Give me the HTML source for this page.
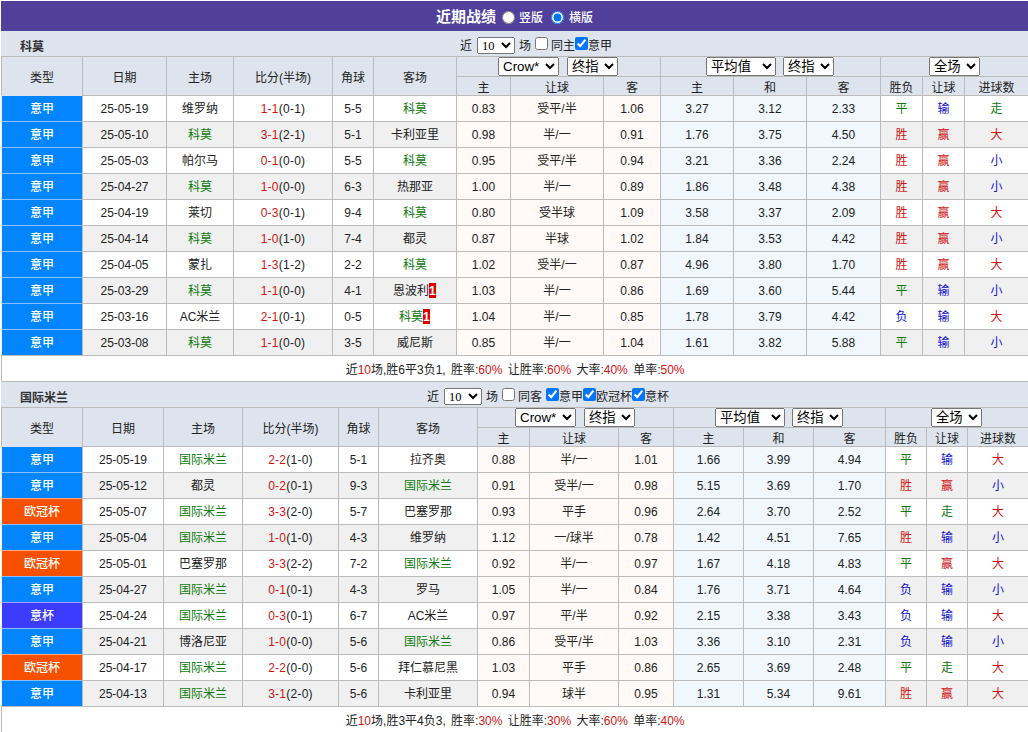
<!DOCTYPE html>
<html lang="zh-CN">
<head>
<meta charset="utf-8">
<title>近期战绩</title>
<style>
html,body{margin:0;padding:0;background:#fff;}
body{font-family:"Liberation Sans","Noto Sans CJK SC",sans-serif;font-size:12px;color:#222;overflow:hidden;}
#wrap{position:absolute;left:1px;top:1px;width:1027px;}
.top{height:30px;line-height:30px;background:#50409c;color:#fff;text-align:center;white-space:nowrap;font-size:12px;}
.top .tt{font-size:15px;font-weight:bold;vertical-align:middle;}
.top .rd{margin:0 4px 0 6px;width:13px;height:13px;vertical-align:middle;}
.top .rd2{margin-left:8px;margin-right:5px;}
.top .rl{vertical-align:middle;position:relative;top:1px;font-weight:500;}
.top .rd{position:relative;top:0.5px;}
table.t{border-collapse:separate;border-spacing:0;table-layout:fixed;width:1027px;}
table.t td,table.t th{box-sizing:border-box;border-left:1px solid #bbb;border-top:1px solid #bbb;padding:0;text-align:center;font-weight:normal;white-space:nowrap;overflow:hidden;}
tr.tb td{height:26px;background:#dde4ee;border-left-color:#dde4ee;}
tr.tb.first td{height:25px;border-top:0;}
tr.tb .nm{float:left;margin-left:18px;font-weight:bold;line-height:25px;color:#333;position:relative;top:4px;}
tr.tb td{position:relative;text-align:left;}
tr.tb .ct{line-height:25px;position:absolute;top:3px;white-space:nowrap;}
tr.tb .ct1{left:458px;}
tr.tb .ct2{left:425px;}
tr.h1 th{height:20px;background:#dde4ee;}
tr.h2 th{height:19px;background:#dde4ee;}
tr.d td{height:26px;background:#fff;}
tr.d.alt td{background:#f0f0f0;}
tr.d td.a{background:#fffaf7;}
tr.d td.e{background:#f0f8fd;}
tr.d td.lg{color:#fff;font-weight:500;border-top-color:rgba(255,255,255,.5);border-left-color:rgba(255,255,255,.94);}
tr.d.f td.lg{border-top-color:#dfe5ee;}
td.l-sa{background:#0385ff !important;}
td.l-cl{background:#f75000 !important;}
td.l-ci{background:#3c3cff !important;}
tr.sm td{height:26px;background:#fff;word-spacing:2px;}
tr.d td.c{padding-bottom:2px;}
.g{color:#0f7a0f;}
.r{color:#cf1414;}
.b{color:#1010d0;}
.rc{display:inline-block;background:#e30000;color:#fff;font-weight:bold;width:7px;height:15px;line-height:17px;font-size:12px;vertical-align:middle;text-align:center;margin:-3px 1px 0 0;text-indent:-0.5px;overflow:hidden;}
select{font-family:"Liberation Sans","Noto Sans CJK SC",sans-serif;font-size:13.33px;height:19px;padding:0;margin:0;vertical-align:top;box-sizing:border-box;color:#000;}
tr.h1 th.sl{line-height:0;font-size:0;}
.s59{width:61px}.s50{width:51px}.s70{width:70px}
tr.h1 th.sl{text-align:left;}
.s38{width:38px;height:17px;margin:0 4px 0 5px;font-family:"Liberation Serif","Noto Serif CJK SC",serif;font-size:12.5px;vertical-align:middle;position:relative;top:-1px;padding-bottom:3px;}
.ml9{margin-left:8px}.ml8{margin-left:7px}
.cb{width:13px;height:13px;margin:0;vertical-align:middle;position:relative;top:-3px;}
.m4{margin:0 3px 0 4px;}
.mr4{margin-right:4px;}

td.sc{letter-spacing:0.25px;}

</style>
</head>
<body>
<div id="wrap">
<div class="top"><span class="tt">近期战绩</span><input type="radio" name="v" class="rd"><span class="rl">竖版</span><input type="radio" name="v" class="rd rd2" checked><span class="rl">横版</span></div>
<table class="t" cellspacing="0" cellpadding="0">
<colgroup><col style="width:81px"><col style="width:84px"><col style="width:67px"><col style="width:99px"><col style="width:41px"><col style="width:83px"><col style="width:54px"><col style="width:93px"><col style="width:57px"><col style="width:73px"><col style="width:73px"><col style="width:74px"><col style="width:42px"><col style="width:42px"><col style="width:64px"></colgroup>
<tr class="tb first"><td colspan="15"><span class="nm">科莫</span><span class="ct ct1">近<select class="s38"><option>10</option></select>场<input type="checkbox" class="cb m4"><span class="lb4">同主</span><input type="checkbox" class="cb" checked>意甲</span></td></tr>
<tr class="h1"><th rowspan="2">类型</th><th rowspan="2">日期</th><th rowspan="2">主场</th><th rowspan="2">比分(半场)</th><th rowspan="2">角球</th><th rowspan="2">客场</th><th colspan="3" class="sl"><select class="s59" style="margin-left:41px"><option>Crow*</option></select><select class="s50 ml9"><option>终指</option></select></th><th colspan="3" class="sl"><select class="s70" style="margin-left:45px"><option>平均值</option></select><select class="s50 ml8"><option>终指</option></select></th><th colspan="3" class="sl"><select class="s50" style="margin-left:48px"><option>全场</option></select></th></tr>
<tr class="h2"><th>主</th><th>让球</th><th>客</th><th>主</th><th>和</th><th>客</th><th>胜负</th><th>让球</th><th>进球数</th></tr>
<tr class="d f"><td class="lg c l-sa">意甲</td><td>25-05-19</td><td class="c">维罗纳</td><td class="sc"><span class="r">1-1</span>(0-1)</td><td>5-5</td><td class="c"><span class="g">科莫</span></td><td class="a">0.83</td><td class="a c">受平/半</td><td class="a">1.06</td><td class="e">3.27</td><td class="e">3.12</td><td class="e">2.33</td><td class="c g">平</td><td class="c b">输</td><td class="c g">走</td></tr>
<tr class="d alt"><td class="lg c l-sa">意甲</td><td>25-05-10</td><td class="c"><span class="g">科莫</span></td><td class="sc"><span class="r">3-1</span>(2-1)</td><td>5-1</td><td class="c">卡利亚里</td><td class="a">0.98</td><td class="a c">半/一</td><td class="a">0.91</td><td class="e">1.76</td><td class="e">3.75</td><td class="e">4.50</td><td class="c r">胜</td><td class="c r">赢</td><td class="c r">大</td></tr>
<tr class="d"><td class="lg c l-sa">意甲</td><td>25-05-03</td><td class="c">帕尔马</td><td class="sc"><span class="r">0-1</span>(0-0)</td><td>5-5</td><td class="c"><span class="g">科莫</span></td><td class="a">0.95</td><td class="a c">受平/半</td><td class="a">0.94</td><td class="e">3.21</td><td class="e">3.36</td><td class="e">2.24</td><td class="c r">胜</td><td class="c r">赢</td><td class="c b">小</td></tr>
<tr class="d alt"><td class="lg c l-sa">意甲</td><td>25-04-27</td><td class="c"><span class="g">科莫</span></td><td class="sc"><span class="r">1-0</span>(0-0)</td><td>6-3</td><td class="c">热那亚</td><td class="a">1.00</td><td class="a c">半/一</td><td class="a">0.89</td><td class="e">1.86</td><td class="e">3.48</td><td class="e">4.38</td><td class="c r">胜</td><td class="c r">赢</td><td class="c b">小</td></tr>
<tr class="d"><td class="lg c l-sa">意甲</td><td>25-04-19</td><td class="c">莱切</td><td class="sc"><span class="r">0-3</span>(0-1)</td><td>9-4</td><td class="c"><span class="g">科莫</span></td><td class="a">0.80</td><td class="a c">受半球</td><td class="a">1.09</td><td class="e">3.58</td><td class="e">3.37</td><td class="e">2.09</td><td class="c r">胜</td><td class="c r">赢</td><td class="c r">大</td></tr>
<tr class="d alt"><td class="lg c l-sa">意甲</td><td>25-04-14</td><td class="c"><span class="g">科莫</span></td><td class="sc"><span class="r">1-0</span>(1-0)</td><td>7-4</td><td class="c">都灵</td><td class="a">0.87</td><td class="a c">半球</td><td class="a">1.02</td><td class="e">1.84</td><td class="e">3.53</td><td class="e">4.42</td><td class="c r">胜</td><td class="c r">赢</td><td class="c b">小</td></tr>
<tr class="d"><td class="lg c l-sa">意甲</td><td>25-04-05</td><td class="c">蒙扎</td><td class="sc"><span class="r">1-3</span>(1-2)</td><td>2-2</td><td class="c"><span class="g">科莫</span></td><td class="a">1.02</td><td class="a c">受半/一</td><td class="a">0.87</td><td class="e">4.96</td><td class="e">3.80</td><td class="e">1.70</td><td class="c r">胜</td><td class="c r">赢</td><td class="c r">大</td></tr>
<tr class="d alt"><td class="lg c l-sa">意甲</td><td>25-03-29</td><td class="c"><span class="g">科莫</span></td><td class="sc"><span class="r">1-1</span>(0-0)</td><td>4-1</td><td class="c">恩波利<span class="rc">1</span></td><td class="a">1.03</td><td class="a c">半/一</td><td class="a">0.86</td><td class="e">1.69</td><td class="e">3.60</td><td class="e">5.44</td><td class="c g">平</td><td class="c b">输</td><td class="c b">小</td></tr>
<tr class="d"><td class="lg c l-sa">意甲</td><td>25-03-16</td><td class="c">AC米兰</td><td class="sc"><span class="r">2-1</span>(0-1)</td><td>0-5</td><td class="c"><span class="g">科莫</span><span class="rc">1</span></td><td class="a">1.04</td><td class="a c">半/一</td><td class="a">0.85</td><td class="e">1.78</td><td class="e">3.79</td><td class="e">4.42</td><td class="c b">负</td><td class="c b">输</td><td class="c r">大</td></tr>
<tr class="d alt"><td class="lg c l-sa">意甲</td><td>25-03-08</td><td class="c"><span class="g">科莫</span></td><td class="sc"><span class="r">1-1</span>(0-0)</td><td>3-5</td><td class="c">威尼斯</td><td class="a">0.85</td><td class="a c">半/一</td><td class="a">1.04</td><td class="e">1.61</td><td class="e">3.82</td><td class="e">5.88</td><td class="c g">平</td><td class="c b">输</td><td class="c b">小</td></tr>
<tr class="sm"><td colspan="15">近<span class="r">10</span>场,胜6平3负1, 胜率:<span class="r">60%</span> 让胜率:<span class="r">60%</span> 大率:<span class="r">40%</span> 单率:<span class="r">50%</span></td></tr>
</table>
<table class="t" cellspacing="0" cellpadding="0">
<colgroup><col style="width:81px"><col style="width:81px"><col style="width:79px"><col style="width:96px"><col style="width:40px"><col style="width:99px"><col style="width:52px"><col style="width:89px"><col style="width:55px"><col style="width:70px"><col style="width:70px"><col style="width:72px"><col style="width:41px"><col style="width:41px"><col style="width:61px"></colgroup>
<tr class="tb"><td colspan="15"><span class="nm">国际米兰</span><span class="ct ct2">近<select class="s38"><option>10</option></select>场<input type="checkbox" class="cb m4"><span class="lb4 mr4">同客</span><input type="checkbox" class="cb" checked>意甲<input type="checkbox" class="cb" checked>欧冠杯<input type="checkbox" class="cb" checked>意杯</span></td></tr>
<tr class="h1"><th rowspan="2">类型</th><th rowspan="2">日期</th><th rowspan="2">主场</th><th rowspan="2">比分(半场)</th><th rowspan="2">角球</th><th rowspan="2">客场</th><th colspan="3" class="sl"><select class="s59" style="margin-left:37px"><option>Crow*</option></select><select class="s50 ml9"><option>终指</option></select></th><th colspan="3" class="sl"><select class="s70" style="margin-left:41px"><option>平均值</option></select><select class="s50 ml8"><option>终指</option></select></th><th colspan="3" class="sl"><select class="s50" style="margin-left:45px"><option>全场</option></select></th></tr>
<tr class="h2"><th>主</th><th>让球</th><th>客</th><th>主</th><th>和</th><th>客</th><th>胜负</th><th>让球</th><th>进球数</th></tr>
<tr class="d f"><td class="lg c l-sa">意甲</td><td>25-05-19</td><td class="c"><span class="g">国际米兰</span></td><td class="sc"><span class="r">2-2</span>(1-0)</td><td>5-1</td><td class="c">拉齐奥</td><td class="a">0.88</td><td class="a c">半/一</td><td class="a">1.01</td><td class="e">1.66</td><td class="e">3.99</td><td class="e">4.94</td><td class="c g">平</td><td class="c b">输</td><td class="c r">大</td></tr>
<tr class="d alt"><td class="lg c l-sa">意甲</td><td>25-05-12</td><td class="c">都灵</td><td class="sc"><span class="r">0-2</span>(0-1)</td><td>9-3</td><td class="c"><span class="g">国际米兰</span></td><td class="a">0.91</td><td class="a c">受半/一</td><td class="a">0.98</td><td class="e">5.15</td><td class="e">3.69</td><td class="e">1.70</td><td class="c r">胜</td><td class="c r">赢</td><td class="c b">小</td></tr>
<tr class="d"><td class="lg c l-cl">欧冠杯</td><td>25-05-07</td><td class="c"><span class="g">国际米兰</span></td><td class="sc"><span class="r">3-3</span>(2-0)</td><td>5-7</td><td class="c">巴塞罗那</td><td class="a">0.93</td><td class="a c">平手</td><td class="a">0.96</td><td class="e">2.64</td><td class="e">3.70</td><td class="e">2.52</td><td class="c g">平</td><td class="c g">走</td><td class="c r">大</td></tr>
<tr class="d alt"><td class="lg c l-sa">意甲</td><td>25-05-04</td><td class="c"><span class="g">国际米兰</span></td><td class="sc"><span class="r">1-0</span>(1-0)</td><td>4-3</td><td class="c">维罗纳</td><td class="a">1.12</td><td class="a c">一/球半</td><td class="a">0.78</td><td class="e">1.42</td><td class="e">4.51</td><td class="e">7.65</td><td class="c r">胜</td><td class="c b">输</td><td class="c b">小</td></tr>
<tr class="d"><td class="lg c l-cl">欧冠杯</td><td>25-05-01</td><td class="c">巴塞罗那</td><td class="sc"><span class="r">3-3</span>(2-2)</td><td>7-2</td><td class="c"><span class="g">国际米兰</span></td><td class="a">0.92</td><td class="a c">半/一</td><td class="a">0.97</td><td class="e">1.67</td><td class="e">4.18</td><td class="e">4.83</td><td class="c g">平</td><td class="c r">赢</td><td class="c r">大</td></tr>
<tr class="d alt"><td class="lg c l-sa">意甲</td><td>25-04-27</td><td class="c"><span class="g">国际米兰</span></td><td class="sc"><span class="r">0-1</span>(0-1)</td><td>4-3</td><td class="c">罗马</td><td class="a">1.05</td><td class="a c">半/一</td><td class="a">0.84</td><td class="e">1.76</td><td class="e">3.71</td><td class="e">4.64</td><td class="c b">负</td><td class="c b">输</td><td class="c b">小</td></tr>
<tr class="d"><td class="lg c l-ci">意杯</td><td>25-04-24</td><td class="c"><span class="g">国际米兰</span></td><td class="sc"><span class="r">0-3</span>(0-1)</td><td>6-7</td><td class="c">AC米兰</td><td class="a">0.97</td><td class="a c">平/半</td><td class="a">0.92</td><td class="e">2.15</td><td class="e">3.38</td><td class="e">3.43</td><td class="c b">负</td><td class="c b">输</td><td class="c r">大</td></tr>
<tr class="d alt"><td class="lg c l-sa">意甲</td><td>25-04-21</td><td class="c">博洛尼亚</td><td class="sc"><span class="r">1-0</span>(0-0)</td><td>5-6</td><td class="c"><span class="g">国际米兰</span></td><td class="a">0.86</td><td class="a c">受平/半</td><td class="a">1.03</td><td class="e">3.36</td><td class="e">3.10</td><td class="e">2.31</td><td class="c b">负</td><td class="c b">输</td><td class="c b">小</td></tr>
<tr class="d"><td class="lg c l-cl">欧冠杯</td><td>25-04-17</td><td class="c"><span class="g">国际米兰</span></td><td class="sc"><span class="r">2-2</span>(0-0)</td><td>5-6</td><td class="c">拜仁慕尼黑</td><td class="a">1.03</td><td class="a c">平手</td><td class="a">0.86</td><td class="e">2.65</td><td class="e">3.69</td><td class="e">2.48</td><td class="c g">平</td><td class="c g">走</td><td class="c r">大</td></tr>
<tr class="d alt"><td class="lg c l-sa">意甲</td><td>25-04-13</td><td class="c"><span class="g">国际米兰</span></td><td class="sc"><span class="r">3-1</span>(2-0)</td><td>5-6</td><td class="c">卡利亚里</td><td class="a">0.94</td><td class="a c">球半</td><td class="a">0.95</td><td class="e">1.31</td><td class="e">5.34</td><td class="e">9.61</td><td class="c r">胜</td><td class="c r">赢</td><td class="c r">大</td></tr>
<tr class="sm"><td colspan="15">近<span class="r">10</span>场,胜3平4负3, 胜率:<span class="r">30%</span> 让胜率:<span class="r">30%</span> 大率:<span class="r">60%</span> 单率:<span class="r">40%</span></td></tr>
</table>
</div>
</body>
</html>
